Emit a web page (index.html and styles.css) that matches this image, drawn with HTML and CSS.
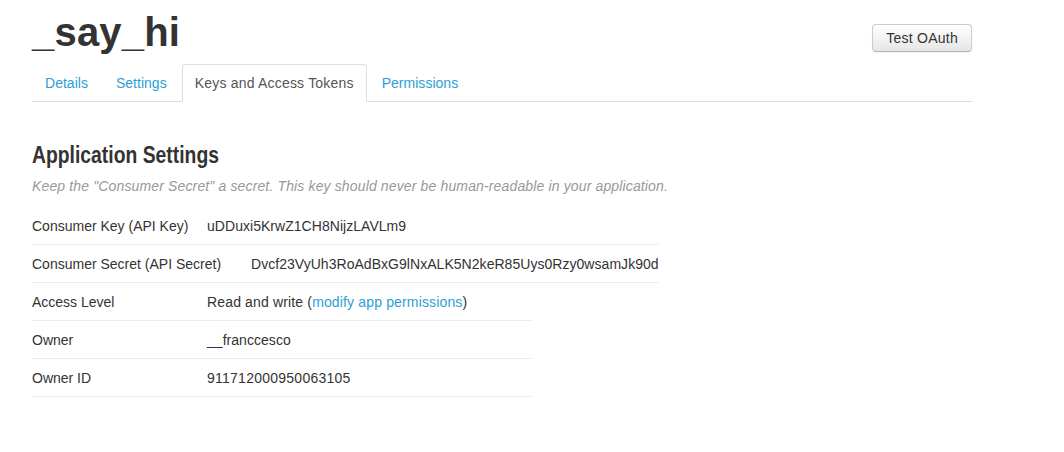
FILE: index.html
```html
<!DOCTYPE html>
<html>
<head>
<meta charset="utf-8">
<link rel="stylesheet" href="styles.css">
</head>
<body>
<div class="page">
  <header class="app-header">
    <h1 class="app-title">_say_hi</h1>
    <button class="btn" type="button">Test OAuth</button>
  </header>
  <ul class="tabs">
    <li><a href="#">Details</a></li>
    <li><a href="#">Settings</a></li>
    <li class="active"><a href="#">Keys and Access Tokens</a></li>
    <li><a href="#">Permissions</a></li>
  </ul>
  <section class="settings">
    <h2 class="section-title">Application Settings</h2>
    <p class="hint">Keep the "Consumer Secret" a secret. This key should never be human-readable in your application.</p>
    <div class="kv kv--keys">
      <div class="kv-row"><span class="kv-label">Consumer Key (API Key)</span><span class="kv-value">uDDuxi5KrwZ1CH8NijzLAVLm9</span></div>
      <div class="kv-row"><span class="kv-label kv-label--wide">Consumer Secret (API Secret)</span><span class="kv-value">Dvcf23VyUh3RoAdBxG9lNxALK5N2keR85Uys0Rzy0wsamJk90d</span></div>
    </div>
    <div class="kv kv--info">
      <div class="kv-row"><span class="kv-label">Access Level</span><span class="kv-value kv-value--wide">Read and write (<a href="#">modify app permissions</a>)</span></div>
      <div class="kv-row"><span class="kv-label">Owner</span><span class="kv-value">__franccesco</span></div>
      <div class="kv-row"><span class="kv-label">Owner ID</span><span class="kv-value kv-value--num">911712000950063105</span></div>
    </div>
  </section>
</div>
</body>
</html>
```
FILE: styles.css
```css
html, body {
  margin: 0;
  padding: 0;
  background: #fff;
}
body {
  font-family: "Liberation Sans", Arial, sans-serif;
  font-size: 14px;
  line-height: 20px;
  color: #333;
}
a {
  color: #2a9fd6;
  text-decoration: none;
}
.page {
  width: 940px;
  padding-left: 32px;
}
.app-header {
  display: flex;
  justify-content: space-between;
  align-items: flex-start;
  height: 64px;
}
.app-title {
  margin: 0;
  padding-top: 10px;
  font-size: 40px;
  line-height: 44px;
  font-weight: bold;
  color: #333;
  letter-spacing: 0.2px;
}
.btn {
  margin-top: 24px;
  height: 28px;
  padding: 0 13px;
  font-family: "Liberation Sans", Arial, sans-serif;
  font-size: 14px;
  letter-spacing: 0.25px;
  color: #333;
  border: 1px solid #ccc;
  border-bottom-color: #b3b3b3;
  border-radius: 4px;
  background: linear-gradient(#ffffff, #e6e6e6);
  box-shadow: inset 0 1px 0 rgba(255,255,255,.2), 0 1px 2px rgba(0,0,0,.05);
}
.tabs {
  display: flex;
  list-style: none;
  margin: 0;
  padding: 0;
  border-bottom: 1px solid #ddd;
}
.tabs li {
  margin-bottom: -1px;
  margin-right: 2px;
}
.tabs a {
  display: block;
  padding: 8px 12px;
  line-height: 20px;
  letter-spacing: 0.02px;
  border: 1px solid transparent;
  border-radius: 4px 4px 0 0;
}
.tabs .active a {
  color: #555;
  background: #fff;
  border-color: #ddd #ddd transparent;
  letter-spacing: 0.2px;
}
.settings {
  padding-top: 38px;
}
.section-title {
  display: inline-block;
  margin: 0;
  font-size: 24px;
  line-height: 30px;
  font-weight: bold;
  transform: scaleX(0.806);
  transform-origin: 0 50%;
}
.hint {
  margin: 6px 0 11px;
  font-style: italic;
  letter-spacing: 0.14px;
  color: #999;
}
.kv--keys {
  display: inline-block;
}
.kv--info {
  width: 500px;
}
.kv-row {
  display: flex;
  padding: 9px 0 8px;
  border-bottom: 1px solid #eee;
  white-space: nowrap;
}
.kv-value {
  letter-spacing: 0.04px;
}
.kv-value--wide {
  letter-spacing: 0.15px;
}
.kv-value--num {
  letter-spacing: 0.25px;
}
.kv-label {
  width: 175px;
  flex: none;
}
.kv-label--wide {
  width: 219px;
}
```
